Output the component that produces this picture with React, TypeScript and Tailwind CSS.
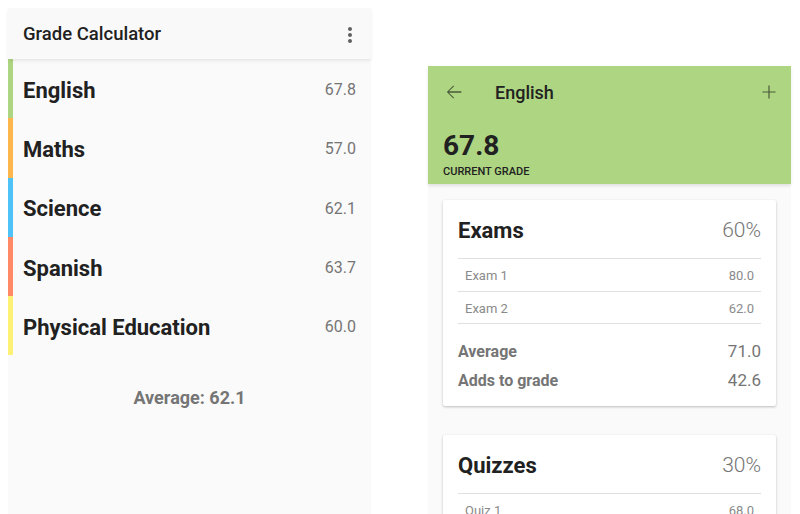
import { ReactNode } from "react";

type Subject = { name: string; grade: string; bar: string };

const SUBJECTS: Subject[] = [
  { name: "English", grade: "67.8", bar: "bg-[#aed581]" },
  { name: "Maths", grade: "57.0", bar: "bg-[#ffb74d]" },
  { name: "Science", grade: "62.1", bar: "bg-[#4fc3f7]" },
  { name: "Spanish", grade: "63.7", bar: "bg-[#ff8a65]" },
  { name: "Physical Education", grade: "60.0", bar: "bg-[#fff176]" },
];

function MoreVert() {
  return (
    <svg width="24" height="24" viewBox="0 0 24 24" className="fill-[#616161]">
      <path d="M12 8c1.1 0 2-.9 2-2s-.9-2-2-2-2 .9-2 2 .9 2 2 2zm0 2c-1.1 0-2 .9-2 2s.9 2 2 2 2-.9 2-2-.9-2-2-2zm0 6c-1.1 0-2 .9-2 2s.9 2 2 2 2-.9 2-2-.9-2-2-2z" />
    </svg>
  );
}

function ArrowBack() {
  return (
    <svg width="22" height="22" viewBox="0 0 24 24" className="fill-[#4a5a3a]">
      <path d="M20 11.3H6.5l5.6-5.6-.8-.8L4.2 12l7.1 7.1.8-.8-5.6-5.6H20z" />
    </svg>
  );
}

function Add() {
  return (
    <svg width="24" height="24" viewBox="0 0 24 24" className="fill-[#4a5a3a]">
      <path d="M18.5 12.6h-5.9v5.9h-1.2v-5.9H5.5v-1.2h5.9V5.5h1.2v5.9h5.9z" />
    </svg>
  );
}

function Card({
  title,
  weight,
  items,
  children,
}: {
  title: string;
  weight: string;
  items: [string, string][];
  children?: ReactNode;
}) {
  return (
    <div className="bg-white rounded-[2px] shadow-[0_1px_3px_rgba(0,0,0,0.18),0_1px_2px_rgba(0,0,0,0.08)] px-[15px]">
      <div className="h-[59px] pt-[3px] flex items-center justify-between border-b border-[#e0e0e0]">
        <span className="text-[22px] font-bold text-[#212121]">{title}</span>
        <span className="text-[21px] font-light text-[#757575]">{weight}</span>
      </div>
      {items.map(([label, value]) => (
        <div
          key={label}
          className="h-[32.5px] pt-[2px] flex items-center justify-between px-[7px] border-b border-[#e0e0e0] text-[13px] text-[#8a8a8a]"
        >
          <span>{label}</span>
          <span>{value}</span>
        </div>
      ))}
      {children}
    </div>
  );
}

export default function App() {
  return (
    <div className="w-[800px] h-[514px] bg-white flex overflow-hidden font-['Roboto','Liberation_Sans',sans-serif]">
      {/* Subject list */}
      <div className="ml-2 mt-2 w-[363px] bg-[#fafafa] flex flex-col">
        <div className="h-[51px] shrink-0 flex items-center justify-between pl-[15px] pr-[9px] pt-[3px] bg-[#f9f9f9] shadow-[0_2px_3px_rgba(0,0,0,0.08)] relative z-10">
          <span className="text-[18.5px] font-medium text-[#212121]">Grade Calculator</span>
          <MoreVert />
        </div>
        {SUBJECTS.map((s) => (
          <div key={s.name} className="h-[59.3px] flex items-stretch">
            <div className={`w-[5px] ${s.bar}`} />
            <div className="flex-1 flex items-center justify-between pl-[10px] pr-[15px] pt-[3px]">
              <span className="text-[22px] font-bold text-[#212121]">{s.name}</span>
              <span className="text-[16px] text-[#757575]">{s.grade}</span>
            </div>
          </div>
        ))}
        <div className="mt-[29px] text-center text-[18px] font-bold text-[#757575]">
          Average: 62.1
        </div>
      </div>

      {/* Subject detail */}
      <div className="ml-[57px] mt-[66px] w-[363px] bg-[#fafafa] flex flex-col">
        <div className="h-[118px] shrink-0 bg-[#aed581] shadow-[0_2px_3px_rgba(0,0,0,0.1)] relative z-10">
          <div className="h-[52px] flex items-center pl-[15px] pr-[10px]">
            <ArrowBack />
            <span className="ml-[30px] text-[18px] font-medium text-[#212121]">English</span>
            <span className="ml-auto">
              <Add />
            </span>
          </div>
          <div className="pl-[15px] pt-[13px] text-[28px] font-bold leading-[30px] text-[#212121]">
            67.8
          </div>
          <div className="pl-[15px] mt-[5px] text-[11px] font-medium leading-[12px] text-[#212121]">
            CURRENT GRADE
          </div>
        </div>
        <div className="px-[15px] pt-[16px] flex flex-col gap-[29px]">
          <Card
            title="Exams"
            weight="60%"
            items={[
              ["Exam 1", "80.0"],
              ["Exam 2", "62.0"],
            ]}
          >
            <div className="pt-[16px] pb-[13px] flex flex-col gap-[5px] text-[#757575]">
              <div className="h-[24px] flex items-center justify-between">
                <span className="text-[16px] font-bold">Average</span>
                <span className="text-[17px]">71.0</span>
              </div>
              <div className="h-[24px] flex items-center justify-between">
                <span className="text-[16px] font-bold">Adds to grade</span>
                <span className="text-[17px]">42.6</span>
              </div>
            </div>
          </Card>
          <Card title="Quizzes" weight="30%" items={[["Quiz 1", "68.0"]]} />
        </div>
      </div>
    </div>
  );
}
